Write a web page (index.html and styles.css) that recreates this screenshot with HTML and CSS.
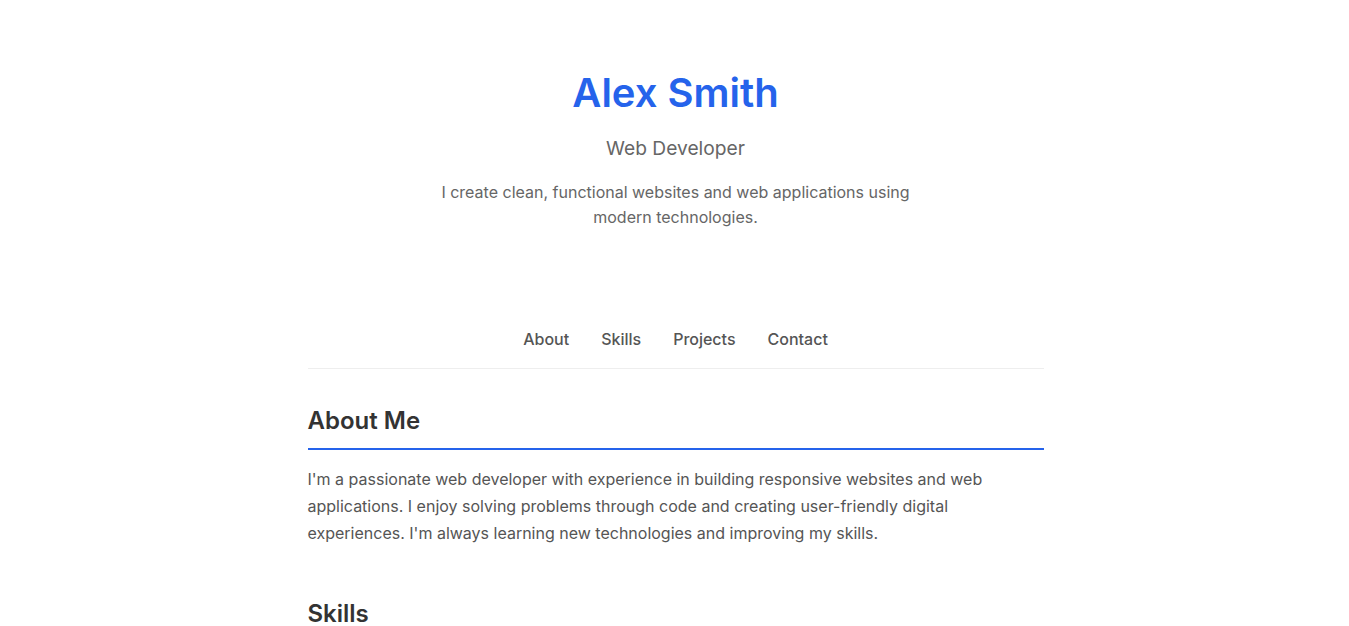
FILE: index.html
```html
<!DOCTYPE html>
<html lang="en">
<head>
<meta charset="utf-8">
<title>Alex Smith - Web Developer</title>
<link rel="stylesheet" href="styles.css">
</head>
<body>
<header class="hero">
  <h1 class="hero-name">Alex Smith</h1>
  <p class="hero-role">Web Developer</p>
  <p class="hero-intro">I create clean, functional websites and web applications using modern technologies.</p>
</header>
<main class="container">
  <nav class="nav">
    <a href="#about" class="nav-link">About</a>
    <a href="#skills" class="nav-link">Skills</a>
    <a href="#projects" class="nav-link">Projects</a>
    <a href="#contact" class="nav-link">Contact</a>
  </nav>
  <section class="section" id="about">
    <h2 class="section-title underlined">About Me</h2>
    <p class="section-text">I'm a passionate web developer with experience in building responsive websites and web applications. I enjoy solving problems through code and creating user-friendly digital experiences. I'm always learning new technologies and improving my skills.</p>
  </section>
  <section class="section" id="skills">
    <h2 class="section-title">Skills</h2>
  </section>
</main>
</body>
</html>
```
FILE: styles.css
```css
* { box-sizing: border-box; }
body {
  margin: 0;
  padding-left: 2px;
  background: #fff;
  font-family: Inter, "Noto Sans", sans-serif;
  color: #333;
}
.hero {
  text-align: center;
  padding: 69px 20px 0;
}
.hero-name {
  margin: 0;
  font-size: 40px;
  line-height: 1.2;
  font-weight: 600;
  color: #2563eb;
}
.hero-role {
  margin: 18px 0 0;
  font-size: 19.2px;
  line-height: 27px;
  color: #666;
}
.hero-intro {
  margin: 18px auto 0;
  max-width: 500px;
  font-size: 16px;
  line-height: 25px;
  color: #666;
}
.container {
  max-width: 736px;
  margin: 0 auto;
  padding-top: 97px;
}
.nav {
  display: flex;
  justify-content: center;
  gap: 32px;
  padding: 1px 0 18px;
  border-bottom: 1px solid #eee;
}
.nav-link {
  font-size: 16px;
  font-weight: 500;
  line-height: 22px;
  color: #555;
  text-decoration: none;
}
.section { padding-top: 36px; }
.section-title {
  margin: 0;
  font-size: 24px;
  font-weight: 600;
  line-height: 32px;
  color: #333;
}
.underlined {
  padding-bottom: 11px;
  border-bottom: 2px solid #2563eb;
}
.section-text {
  margin: 16px 0 0;
  font-size: 16px;
  line-height: 27px;
  color: #555;
}
#skills { padding-top: 51px; }
```
